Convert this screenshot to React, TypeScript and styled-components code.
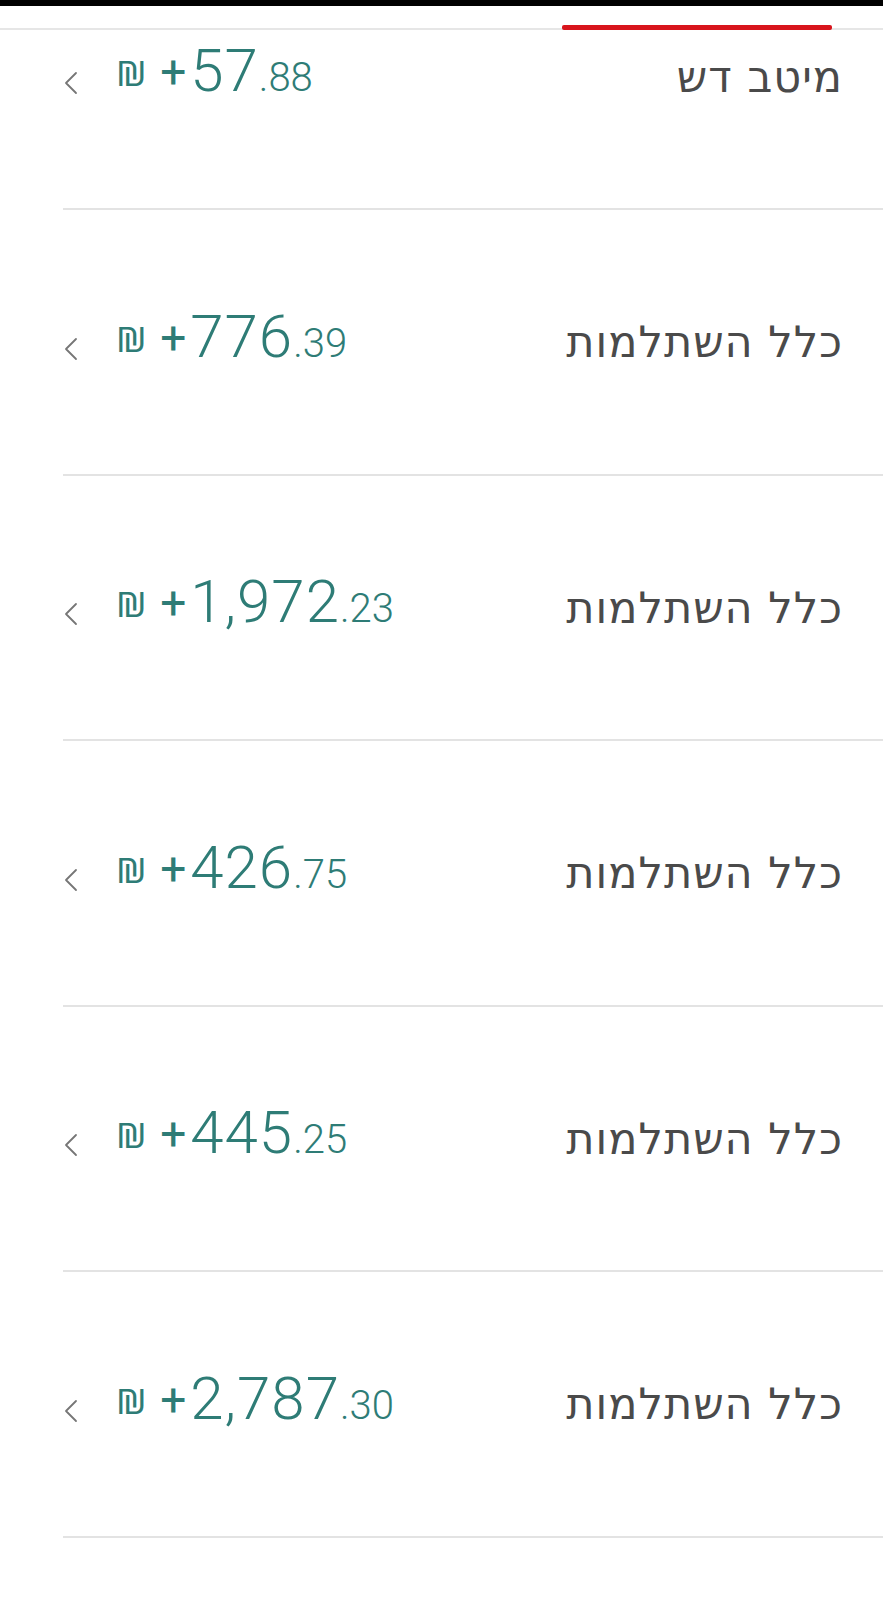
import React from "react";
import styled, { createGlobalStyle } from "styled-components";

const GlobalStyle = createGlobalStyle`
  html, body {
    margin: 0;
    padding: 0;
    background: #ffffff;
  }
  * {
    box-sizing: border-box;
  }
`;

type Fund = {
  label: string;
  whole: string;
  cents: string;
};

const funds: Fund[] = [
  { label: "מיטב דש", whole: "57", cents: "88" },
  { label: "כלל השתלמות", whole: "776", cents: "39" },
  { label: "כלל השתלמות", whole: "1,972", cents: "23" },
  { label: "כלל השתלמות", whole: "426", cents: "75" },
  { label: "כלל השתלמות", whole: "445", cents: "25" },
  { label: "כלל השתלמות", whole: "2,787", cents: "30" },
];

const Chevron = () => (
  <svg width="15" height="24" viewBox="0 0 15 24" fill="none">
    <polyline
      points="13,2 3,12 13,22"
      stroke="#767676"
      strokeWidth="1.8"
      strokeLinecap="round"
      strokeLinejoin="round"
    />
  </svg>
);

const App: React.FC = () => {
  return (
    <Page>
      <GlobalStyle />
      <StatusBar />
      <TabStrip>
        <Indicator />
      </TabStrip>
      <Viewport>
        <Track>
          {funds.map((fund, i) => (
            <Row key={i}>
              <Label>{fund.label}</Label>
              <AmountGroup>
                <ChevronBox>
                  <Chevron />
                </ChevronBox>
                <Shekel>₪</Shekel>
                <Plus>+</Plus>
                <Whole>{fund.whole}</Whole>
                <Cents>.{fund.cents}</Cents>
              </AmountGroup>
            </Row>
          ))}
        </Track>
      </Viewport>
    </Page>
  );
};

export default App;

const Page = styled.div`
  direction: rtl;
  width: 883px;
  height: 1600px;
  display: flex;
  flex-direction: column;
  overflow: hidden;
  background: #ffffff;
`;

const StatusBar = styled.div`
  height: 6px;
  background: #000000;
  flex-shrink: 0;
`;

const TabStrip = styled.div`
  position: relative;
  height: 24px;
  flex-shrink: 0;
  border-bottom: 2px solid #e6e6e6;
`;

const Indicator = styled.div`
  position: absolute;
  right: 51px;
  bottom: -2px;
  width: 270px;
  height: 5px;
  border-radius: 2px;
  background: #d8141c;
`;

const Viewport = styled.div`
  flex: 1;
  overflow: hidden;
`;

const Track = styled.div`
  margin-top: -85.5px;
  display: flex;
  flex-direction: column;
`;

const Row = styled.div`
  height: 265.5px;
  flex-shrink: 0;
  display: flex;
  align-items: center;
  justify-content: space-between;
  padding: 0 40px 10px 0;
  margin-left: 63px;
  border-bottom: 2px solid #e3e3e3;
`;

const Label = styled.div`
  font-family: "DejaVu Sans", "Open Sans", sans-serif;
  font-size: 43px;
  letter-spacing: 1px;
  color: #4a4a4a;
  line-height: 1;
  margin-top: 12px;
`;

const AmountGroup = styled.div`
  direction: ltr;
  display: flex;
  align-items: baseline;
  color: #2e7c76;
  font-family: Roboto, "DejaVu Sans", sans-serif;
  font-weight: 300;
  line-height: 1;
`;

const ChevronBox = styled.span`
  display: inline-flex;
  align-self: center;
  margin-right: 38px;
  margin-top: 24px;
`;

const Shekel = styled.span`
  display: inline-block;
  font-family: "Noto Sans", "DejaVu Sans", sans-serif;
  font-weight: 400;
  font-size: 34px;
  margin-right: 17px;
  transform: translateY(-5px) scaleX(1.12);
  transform-origin: left center;
`;

const Plus = styled.span`
  font-size: 46px;
  font-weight: 400;
  margin-right: 4px;
  position: relative;
  top: -3px;
`;

const Whole = styled.span`
  font-size: 60px;
  letter-spacing: 1px;
`;

const Cents = styled.span`
  font-size: 40px;
`;
